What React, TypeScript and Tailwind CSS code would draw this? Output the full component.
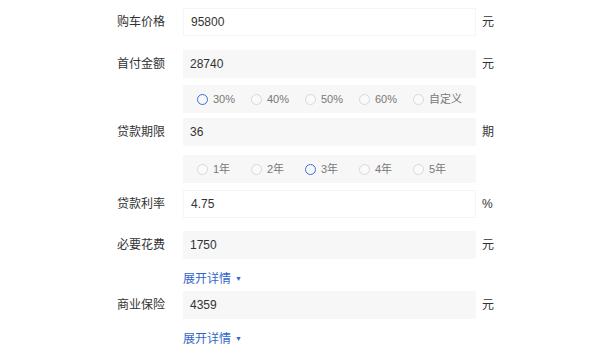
import { useState } from "react";

const font = { fontFamily: '"Liberation Sans", "Noto Sans CJK SC", sans-serif' };

function Field({
  label,
  value,
  unit,
  white,
  className = "",
}: {
  label: string;
  value: string;
  unit: string;
  white?: boolean;
  className?: string;
}) {
  return (
    <div className={`flex items-center ${className}`}>
      <div className="w-[66px] text-[12px] text-[#333]">{label}</div>
      <div
        className={`flex h-[28px] w-[293px] items-center pl-[7px] text-[12px] text-[#333] ${
          white ? "border border-[#f5f5f5] bg-white" : "bg-[#f7f7f7]"
        }`}
      >
        {value}
      </div>
      <div className="ml-[6px] text-[12px] text-[#333]">{unit}</div>
    </div>
  );
}

function Radios({
  options,
  initial,
  className = "",
}: {
  options: string[];
  initial: number;
  className?: string;
}) {
  const [sel, setSel] = useState(initial);
  return (
    <div className={`ml-[66px] flex h-[28px] w-[293px] items-center bg-[#f7f7f7] pl-[14px] ${className}`}>
      {options.map((o, i) => (
        <button
          key={o}
          onClick={() => setSel(i)}
          className="flex w-[54px] items-center text-[11px] text-[#777]"
        >
          <span
            className={`mr-[5px] inline-block h-[11px] w-[11px] rounded-full border ${
              sel === i ? "border-[1.5px] border-[#3a6fd8]" : "border-[#d8d8d8] bg-[#fafafa]"
            }`}
          />
          {o}
        </button>
      ))}
    </div>
  );
}

function More({ className = "" }: { className?: string }) {
  return (
    <div className={`ml-[66px] flex h-[20px] items-center text-[12px] text-[#3366cc] ${className}`}>
      展开详情
      <span className="ml-[4px] text-[7px]">▼</span>
    </div>
  );
}

export default function App() {
  return (
    <div className="h-[350px] w-[600px] overflow-hidden bg-white pl-[117px]" style={font}>
      <Field label="购车价格" value="95800" unit="元" white className="pt-[8px]" />
      <Field label="首付金额" value="28740" unit="元" className="mt-[14px]" />
      <Radios options={["30%", "40%", "50%", "60%", "自定义"]} initial={0} className="mt-[7px]" />
      <Field label="贷款期限" value="36" unit="期" className="mt-[5px]" />
      <Radios options={["1年", "2年", "3年", "4年", "5年"]} initial={2} className="mt-[9px]" />
      <Field label="贷款利率" value="4.75" unit="%" white className="mt-[7px]" />
      <Field label="必要花费" value="1750" unit="元" className="mt-[13px]" />
      <More className="mt-[10px]" />
      <Field label="商业保险" value="4359" unit="元" className="mt-[2px]" />
      <More className="mt-[10px]" />
    </div>
  );
}
